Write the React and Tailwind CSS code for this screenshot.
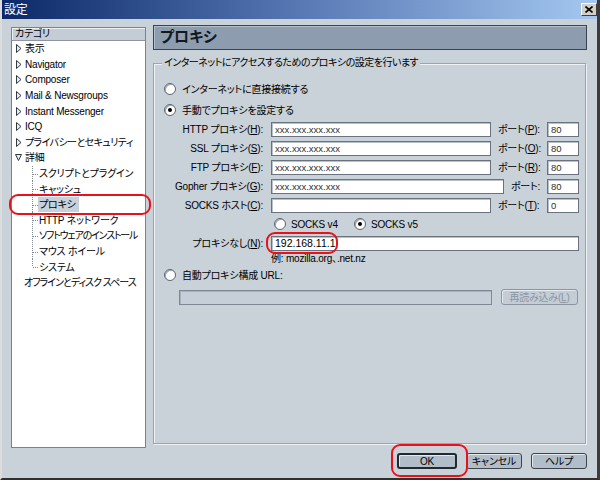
import React from "react";

const TreeArrow = ({ down }) => (
  <svg width="7" height="9" viewBox="0 0 7 9" className="shrink-0">
    {down ? (
      <path d="M0.5 1.5 L6.5 1.5 L3.5 7.5 Z" fill="#e8ecf0" stroke="#303840" />
    ) : (
      <path d="M1.5 0.5 L1.5 8.5 L6 4.5 Z" fill="#e8ecf0" stroke="#303840" />
    )}
  </svg>
);

const Branch = ({ last }) => (
  <svg width="6" height="16" viewBox="0 0 6 16" className="shrink-0">
    <line x1="0.5" y1="0" x2="0.5" y2={last ? 8 : 16} stroke="#808890" strokeDasharray="1 1" />
    <line x1="1" y1="8.5" x2="6" y2="8.5" stroke="#808890" strokeDasharray="1 1" />
  </svg>
);

const Radio = ({ checked }) => (
  <span className="w-[12px] h-[12px] rounded-full border border-[#5c6470] bg-white shadow-[inset_1px_1px_0_#a0a8b0] flex items-center justify-center shrink-0">
    {checked && <span className="w-[4px] h-[4px] rounded-full bg-black" />}
  </span>
);

const Field = ({ w, value }) => (
  <div className={`${w} h-[15px] bg-white border border-[#6a7280] shadow-[inset_1px_1px_0_#b8c0c8] px-[3px] text-[9.5px] leading-[13px] text-[#303030] tracking-normal`}>
    {value}
  </div>
);

const topItems = ["表示", "Navigator", "Composer", "Mail & Newsgroups", "Instant Messenger", "ICQ", "プライバシーとセキュリティ"];
const childItems = ["スクリプトとプラグイン", "キャッシュ", "プロキシ", "HTTP ネットワーク", "ソフトウェアのインストール", "マウス ホイール", "システム"];

const proxyRows = [
  { label: "HTTP プロキシ", key: "H", port: "P", value: "xxx.xxx.xxx.xxx", portValue: "80" },
  { label: "SSL プロキシ", key: "S", port: "O", value: "xxx.xxx.xxx.xxx", portValue: "80" },
  { label: "FTP プロキシ", key: "F", port: "R", value: "xxx.xxx.xxx.xxx", portValue: "80" },
];

const Btn = ({ children, def, disabled, w }) => (
  <div
    className={`${w} h-[16px] rounded-[3px] flex items-center justify-center shadow-[inset_1px_1px_0_#e4e9ee] ${
      def ? "border-2 border-[#202830]" : "border"
    } ${disabled ? "text-[#8c96a2] border-[#8c96a2] bg-[#c4ccd6]" : "text-black border-[#3c4450] bg-[#b2bdca]"}`}
  >
    {children}
  </div>
);

export default function App() {
  return (
    <div className="w-[600px] h-[480px] relative bg-[#c9d1d9] border-l-2 border-l-[#dcdcdc] border-r-[3px] border-r-[#3c3c3c] border-b-2 border-b-[#303030] font-['Liberation_Sans','Noto_Sans_CJK_JP',sans-serif] text-[10px] tracking-[-0.2px] text-black [font-feature-settings:'palt'] overflow-hidden">
      {/* title bar */}
      <div className="h-[19px] flex items-center justify-between bg-gradient-to-r from-[#0c2868] via-[#5878b4] to-[#a4c8f0] pl-[2px]">
        <span className="text-white text-[12px] leading-none">設定</span>
        <div className="w-[16px] h-[13px] bg-[#d4d0c8] border border-t-white border-l-white border-r-[#404040] border-b-[#404040] flex items-center justify-center">
          <svg width="8" height="7" viewBox="0 0 8 7">
            <path d="M0.5 0.5 L7.5 6.5 M7.5 0.5 L0.5 6.5" stroke="#000" strokeWidth="1.6" />
          </svg>
        </div>
      </div>

      <div className="flex pl-[9px] pt-[6px]">
        {/* tree */}
        <div className="mt-[2px] w-[135px] h-[421px] bg-white border border-[#7a8292] flex flex-col overflow-hidden">
          <div className="h-[13px] bg-[#c4ccd5] border-b border-[#8e96a4] shadow-[inset_1px_1px_0_#eef1f4] pl-[3px] leading-[12px]">カテゴリ</div>
          {topItems.map((t) => (
            <div key={t} className="h-[15.6px] flex items-center pl-[3px] gap-[3px] whitespace-nowrap">
              <TreeArrow />
              <span className={t.length > 10 && !t.includes(" ") ? "tracking-[-0.6px]" : ""}>{t}</span>
            </div>
          ))}
          <div className="h-[15.6px] flex items-center pl-[3px] gap-[3px]">
            <TreeArrow down />
            <span>詳細</span>
          </div>
          {childItems.map((t, i) => (
            <div key={t} className="h-[15.6px] flex items-center pl-[20px] whitespace-nowrap">
              <Branch last={i === childItems.length - 1} />
              <span
                className={`pl-[1px] pr-[3px] ${t === "プロキシ" ? "bg-[#c8d0da]" : ""} ${
                  t === "ソフトウェアのインストール" ? "tracking-[-1.2px]" : ""
                }`}
              >
                {t}
              </span>
            </div>
          ))}
          <div className="h-[15.6px] flex items-center pl-[12px] whitespace-nowrap tracking-[-1px]">オフラインとディスク スペース</div>
        </div>

        {/* right side */}
        <div className="ml-[7px] w-[434px] flex flex-col">
          <div className="h-[25px] bg-[#8d9cae] border border-[#3a4250] shadow-[inset_1px_1px_0_#b4c0ce] flex items-center pl-[6px] text-[15px] tracking-normal font-bold text-[#101820]">
            プロキシ
          </div>

          <div className="relative mt-[13px] w-[433px] h-[381px] border border-[#9aa4b2] shadow-[inset_1px_1px_0_#eef2f6,1px_1px_0_#eef2f6] flex flex-col pl-[10px]">
            <span className="absolute -top-[8px] left-[8px] px-[2px] bg-[#c9d1d9] leading-[14px] tracking-[-0.5px]">インターネットにアクセスするためのプロキシの設定を行います</span>

            <div className="mt-[18px] h-[14px] flex items-center gap-[6px]">
              <Radio />
              <span>インターネットに直接接続する</span>
            </div>
            <div className="mt-[7px] h-[14px] flex items-center gap-[6px]">
              <Radio checked />
              <span>手動でプロキシを設定する</span>
            </div>

            <div className="mt-[5px] flex flex-col gap-[4px] -ml-[10px]">
              {proxyRows.map((r) => (
                <div key={r.key} className="h-[15px] flex items-center">
                  <span className="w-[109px] text-right whitespace-nowrap">
                    {r.label}(<u>{r.key}</u>):
                  </span>
                  <div className="ml-[8px]"><Field w="w-[220px]" value={r.value} /></div>
                  <span className="ml-[7px] w-[49px] whitespace-nowrap">ポート(<u>{r.port}</u>):</span>
                  <Field w="w-[32px]" value={r.portValue} />
                </div>
              ))}
              <div className="h-[15px] flex items-center">
                <span className="w-[109px] text-right whitespace-nowrap">
                  Gopher プロキシ(<u>G</u>):
                </span>
                <div className="ml-[8px]"><Field w="w-[233px]" value="xxx.xxx.xxx.xxx" /></div>
                <span className="ml-[7px] w-[36px] whitespace-nowrap">ポート:</span>
                <Field w="w-[32px]" value="80" />
              </div>
              <div className="h-[15px] flex items-center">
                <span className="w-[109px] text-right whitespace-nowrap">
                  SOCKS ホスト(<u>C</u>):
                </span>
                <div className="ml-[8px]"><Field w="w-[220px]" value="" /></div>
                <span className="ml-[7px] w-[49px] whitespace-nowrap">ポート(<u>T</u>):</span>
                <Field w="w-[32px]" value="0" />
              </div>
            </div>

            <div className="mt-[4px] h-[14px] flex items-center pl-[110px]">
              <Radio />
              <span className="ml-[5px] w-[63px]">SOCKS v4</span>
              <Radio checked />
              <span className="ml-[5px]">SOCKS v5</span>
            </div>

            <div className="mt-[5px] h-[15px] flex items-center -ml-[10px]">
              <span className="w-[109px] text-right whitespace-nowrap">
                プロキシなし(<u>N</u>):
              </span>
              <div className="ml-[8px]"><Field w="w-[308px]" value={<span className="text-[10.5px] text-black">192.168.11.1</span>} /></div>
            </div>
            <div className="mt-[1px] pl-[107px] leading-[13px]">例: mozilla.org、.net.nz</div>

            <div className="mt-[3px] h-[14px] flex items-center gap-[6px]">
              <Radio />
              <span>自動プロキシ構成 URL:</span>
            </div>

            <div className="mt-[7px] flex items-center pl-[15px]">
              <div className="w-[313px] h-[15px] bg-[#c6ced7] border border-[#808896] shadow-[inset_1px_1px_0_#a8b0bc]" />
              <div className="ml-[9px]">
                <Btn disabled w="w-[77px]">再読み込み(<u>L</u>)</Btn>
              </div>
            </div>
          </div>

          <div className="mt-[9px] flex justify-end gap-[9px]">
            <Btn def w="w-[60px]">OK</Btn>
            <Btn w="w-[56px]">キャンセル</Btn>
            <Btn w="w-[56px]">ヘルプ</Btn>
          </div>
        </div>
      </div>

      {/* red highlight marks */}
      <div className="absolute left-[7px] top-[194px] w-[142px] h-[21px] rounded-[9px] border-[2.5px] border-[#e8121a]" />
      <div className="absolute left-[264px] top-[232px] w-[72px] h-[22px] rounded-[9px] border-[2.5px] border-[#e8121a]" />
      <div className="absolute left-[389px] top-[444px] w-[77px] h-[33px] rounded-[9px] border-[2.5px] border-[#e8121a]" />
    </div>
  );
}
